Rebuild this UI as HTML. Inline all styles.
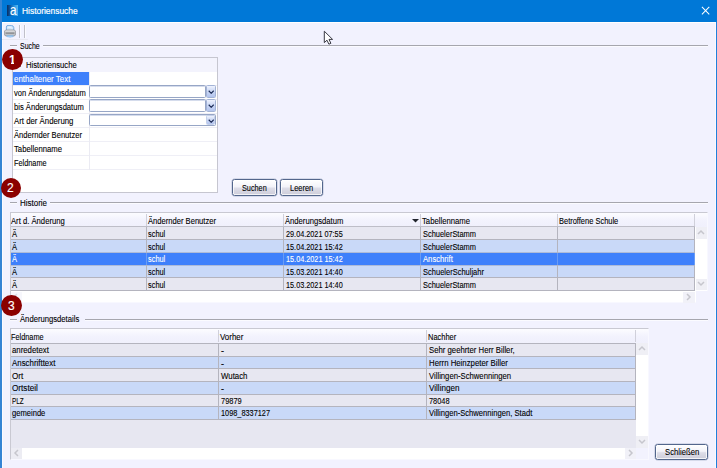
<!DOCTYPE html>
<html lang="de"><head><meta charset="utf-8"><title>Historiensuche</title>
<style>
*{box-sizing:border-box;margin:0;padding:0}
html,body{width:717px;height:468px;overflow:hidden}
body{background:#f2f2fe;font-family:"Liberation Sans","DejaVu Sans",sans-serif;font-size:8.5px;color:#000;position:relative}
.a{position:absolute}
.t{position:absolute;white-space:nowrap;line-height:12px;height:12px;font-size:8.5px;transform-origin:0 50%;-webkit-text-stroke:0.1px currentColor}
.w{color:#fff}
.circ{width:20.8px;height:20.8px;border-radius:50%;background:#8b0000;color:#fff}
.circ span{position:absolute;top:-.3px;width:41.6px;height:41.6px;font-size:24px;line-height:41.6px;text-align:center;transform:scale(.5);transform-origin:0 0;-webkit-text-stroke:.25px #fff}
.btn{border:1px solid #53668c;border-radius:2.5px;background:linear-gradient(#ffffff,#f3f3f9 45%,#dddde8 55%,#cdcdda);box-shadow:inset 0 0 0 1px rgba(255,255,255,.75),0 0 0 .5px rgba(83,102,140,.35)}
.combo{border:1px solid #97a6c6;background:#fff;border-radius:1.5px;box-shadow:inset 0 1px 0 #d5dcec}
.dd{border:1px solid #a3b3d6;background:linear-gradient(#eef2fd,#c9d6f4 50%,#b4c5ee);border-radius:1.5px}
</style></head><body>

<div class="a" style="left:0px;top:0px;width:717px;height:22px;background:#0078d7;"></div>
<div class="a" style="left:0px;top:0px;width:1.5px;height:468px;background:#3484d4;"></div>
<div class="a" style="left:715.8px;top:21.8px;width:1.2px;height:446.2px;background:#1f80dc;"></div>
<div class="a" style="left:714.9px;top:22px;width:0.9px;height:446px;background:#fafaff;"></div>
<div class="a" style="left:1.5px;top:22px;width:0.8px;height:446px;background:#fafaff;"></div>
<div class="a" style="left:1.5px;top:21.7px;width:714.5px;height:1.5px;background:#ffffff;"></div>
<div class="a" style="left:7.3px;top:5.3px;width:10.3px;height:10.4px;background:linear-gradient(90deg,#0a2f63 0%,#0f62b0 35%,#2b9be6 70%,#59b7f0 100%);"></div>
<div class="t w" style="left:9.5px;top:2.9px;font-size:14.5px;line-height:14px;height:14px;transform:scaleX(.8)">a</div>
<div class="t w" style="left:22.2px;top:5px;font-size:9.3px;transform:scaleX(.905);-webkit-text-stroke:.2px #fff">Historiensuche</div>
<svg class="a" style="left:701.2px;top:6.3px" width="9.2" height="9.2" viewBox="0 0 10 10"><path d="M1 1L9 9M9 1L1 9" stroke="#fff" stroke-width="1.1" fill="none"/></svg>
<svg class="a" style="left:4px;top:25.4px" width="12" height="12.6" viewBox="0 0 12 12.6">
<path d="M2.4 6V2.2Q2.4 .4 4 .4h3.6Q9.4 .6 9.8 2.6V6z" fill="#cfe5fb" stroke="#5f9bd8" stroke-width=".8"/>
<path d="M3.6 2.2h3.2l1.2 1.4" fill="none" stroke="#f4faff" stroke-width=".9"/>
<rect x=".4" y="5" width="11.2" height="6" rx="2" fill="#c1c2c5" stroke="#8a8c90" stroke-width=".7"/>
<rect x="1.2" y="5.6" width="9.6" height="1.2" rx=".6" fill="#dcdde0"/>
<rect x="1.6" y="7.5" width="8.8" height="1.3" fill="#85878b"/>
<path d="M2.8 10.4h6.4v1.2q-3.2 1.2-6.4 0z" fill="#a9d3f7" stroke="#76ade2" stroke-width=".5"/>
</svg>
<div class="a" style="left:18.8px;top:25px;width:1px;height:13px;background:#c0c0c9;"></div>
<div class="a" style="left:19.8px;top:25px;width:0.7px;height:13px;background:#fbfbff;"></div>
<div class="a" style="left:23.7px;top:25px;width:1px;height:13px;background:#c0c0c9;"></div>
<div class="a" style="left:24.7px;top:25px;width:0.7px;height:13px;background:#fbfbff;"></div>
<div class="a" style="left:2px;top:38.5px;width:26px;height:1px;background:#e8e8f1;"></div>
<div class="a" style="left:10px;top:45px;width:7px;height:1px;background:#a6a6ae;"></div>
<div class="a" style="left:10px;top:46px;width:7px;height:1px;background:#fbfbff;"></div>
<div class="t " style="left:20px;top:39.5px;transform:scaleX(0.819);">Suche</div>
<div class="a" style="left:42.8px;top:45px;width:665.2px;height:1px;background:#a6a6ae;"></div>
<div class="a" style="left:42.8px;top:46px;width:665.2px;height:1px;background:#fbfbff;"></div>
<div class="a" style="left:10px;top:202px;width:7px;height:1px;background:#a6a6ae;"></div>
<div class="a" style="left:10px;top:203px;width:7px;height:1px;background:#fbfbff;"></div>
<div class="t " style="left:20px;top:196.5px;transform:scaleX(0.939);">Historie</div>
<div class="a" style="left:50.099999999999994px;top:202px;width:657.9px;height:1px;background:#a6a6ae;"></div>
<div class="a" style="left:50.099999999999994px;top:203px;width:657.9px;height:1px;background:#fbfbff;"></div>
<div class="a" style="left:10px;top:318.5px;width:7px;height:1px;background:#a6a6ae;"></div>
<div class="a" style="left:10px;top:319.5px;width:7px;height:1px;background:#fbfbff;"></div>
<div class="t " style="left:20px;top:313.0px;transform:scaleX(0.902);">Änderungsdetails</div>
<div class="a" style="left:85.3px;top:318.5px;width:622.7px;height:1px;background:#a6a6ae;"></div>
<div class="a" style="left:85.3px;top:319.5px;width:622.7px;height:1px;background:#fbfbff;"></div>
<div class="a" style="left:12px;top:57px;width:206px;height:136px;background:#ffffff;border:1px solid #c6c6d0"></div>
<div class="a" style="left:13px;top:58px;width:204px;height:13.5px;background:#f3f3fd;"></div>
<div class="t " style="left:26.4px;top:58.5px;transform:scaleX(0.902);">Historiensuche</div>
<div class="a" style="left:14.4px;top:60.4px;width:6.2px;height:6.2px;background:#fff;border:.7px solid #7a7a88"></div>
<div class="a" style="left:13px;top:71.5px;width:75.5px;height:13.5px;background:#3e80fb;"></div>
<div class="t w" style="left:13.8px;top:73.1px;transform:scaleX(0.935);">enthaltener Text</div>
<div class="a" style="left:13px;top:85px;width:204px;height:1px;background:#efeff6;"></div>
<div class="t " style="left:13.8px;top:87.1px;transform:scaleX(0.889);">von Änderungsdatum</div>
<div class="a" style="left:13px;top:99px;width:204px;height:1px;background:#efeff6;"></div>
<div class="t " style="left:13.8px;top:101.1px;transform:scaleX(0.895);">bis Änderungsdatum</div>
<div class="a" style="left:13px;top:113px;width:204px;height:1px;background:#efeff6;"></div>
<div class="t " style="left:13.8px;top:115.1px;transform:scaleX(0.918);">Art der Änderung</div>
<div class="a" style="left:13px;top:127px;width:204px;height:1px;background:#efeff6;"></div>
<div class="t " style="left:13.8px;top:129.1px;transform:scaleX(0.894);">Ändernder Benutzer</div>
<div class="a" style="left:13px;top:141px;width:204px;height:1px;background:#efeff6;"></div>
<div class="t " style="left:13.8px;top:143.1px;transform:scaleX(0.908);">Tabellenname</div>
<div class="a" style="left:13px;top:155px;width:204px;height:1px;background:#efeff6;"></div>
<div class="t " style="left:13.8px;top:157.1px;transform:scaleX(0.861);">Feldname</div>
<div class="a" style="left:13px;top:169px;width:204px;height:1px;background:#efeff6;"></div>
<div class="a" style="left:88.5px;top:71.5px;width:1px;height:98px;background:#ebebf3;"></div>
<div class="a combo" style="left:89px;top:85.2px;width:116.5px;height:12.5px"></div>
<div class="a dd" style="left:206px;top:85.2px;width:10px;height:12.5px"></div>
<div class="a combo" style="left:89px;top:99.2px;width:116.5px;height:12.5px"></div>
<div class="a dd" style="left:206px;top:99.2px;width:10px;height:12.5px"></div>
<div class="a combo" style="left:89px;top:113.9px;width:127.3px;height:12.5px"></div>
<div class="a dd" style="left:205.6px;top:114.9px;width:9.8px;height:10.5px;border-color:#c4d0ea"></div>
<svg class="a" style="left:207.6px;top:89.9px" width="6.4" height="4.6" viewBox="0 0 7 5"><path d="M.8 .8L3.5 3.6L6.2 .8" stroke="#1b2a55" stroke-width="1.25" fill="none"/></svg>
<svg class="a" style="left:207.6px;top:103.9px" width="6.4" height="4.6" viewBox="0 0 7 5"><path d="M.8 .8L3.5 3.6L6.2 .8" stroke="#1b2a55" stroke-width="1.25" fill="none"/></svg>
<svg class="a" style="left:207.6px;top:118.5px" width="6.4" height="4.6" viewBox="0 0 7 5"><path d="M.8 .8L3.5 3.6L6.2 .8" stroke="#1b2a55" stroke-width="1.25" fill="none"/></svg>
<div class="a btn" style="left:232px;top:179px;width:44.6px;height:16.8px"></div>
<div class="t " style="left:242.3px;top:181.70000000000002px;transform:scaleX(0.858);">Suchen</div>
<div class="a btn" style="left:279.8px;top:179px;width:43.4px;height:16.8px"></div>
<div class="t " style="left:290.1px;top:181.70000000000002px;transform:scaleX(0.878);">Leeren</div>
<div class="a btn" style="left:655px;top:444px;width:53px;height:15.5px"></div>
<div class="t " style="left:664.8px;top:446.05px;transform:scaleX(0.906);">Schließen</div>
<div class="a" style="left:10px;top:212px;width:698px;height:91px;background:#ffffff;border:1px solid #c9c9d2;border-right-color:#f8f8ff;border-bottom-color:#f8f8ff"></div>
<div class="a" style="left:11px;top:213px;width:696px;height:13.5px;background:linear-gradient(#fcfcff 0%,#f2f2fd 55%,#f0f0fc 100%);"></div>
<div class="a" style="left:11px;top:226.3px;width:684px;height:1px;background:#bebec8;"></div>
<div class="a" style="left:11px;top:227.0px;width:684px;height:13.0px;background:#e7e7f1;"></div>
<div class="a" style="left:11px;top:240.0px;width:684px;height:12.699999999999989px;background:#c9d9f8;"></div>
<div class="a" style="left:11px;top:252.7px;width:684px;height:12.600000000000023px;background:#3e80fb;"></div>
<div class="a" style="left:11px;top:265.3px;width:684px;height:12.599999999999966px;background:#c9d9f8;"></div>
<div class="a" style="left:11px;top:277.9px;width:684px;height:12.600000000000023px;background:#e7e7f1;"></div>
<div class="a" style="left:11px;top:239.3px;width:684px;height:1px;background:#b4b4be;"></div>
<div class="a" style="left:11px;top:277.2px;width:684px;height:1px;background:#b4b4be;"></div>
<div class="a" style="left:11px;top:289.8px;width:684px;height:1px;background:#b4b4be;"></div>
<div class="a" style="left:11px;top:252.0px;width:684px;height:1px;background:#aebbd8;"></div>
<div class="a" style="left:11px;top:264.6px;width:684px;height:1px;background:#aebbd8;"></div>
<div class="a" style="left:146.0px;top:214px;width:1px;height:12px;background:#d0d0da;"></div>
<div class="a" style="left:146.0px;top:227px;width:1px;height:63.5px;background:#b4b4be;"></div>
<div class="a" style="left:146.0px;top:252.8px;width:1px;height:12px;background:#6a9cf4;"></div>
<div class="a" style="left:283.2px;top:214px;width:1px;height:12px;background:#d0d0da;"></div>
<div class="a" style="left:283.2px;top:227px;width:1px;height:63.5px;background:#b4b4be;"></div>
<div class="a" style="left:283.2px;top:252.8px;width:1px;height:12px;background:#6a9cf4;"></div>
<div class="a" style="left:420.2px;top:214px;width:1px;height:12px;background:#d0d0da;"></div>
<div class="a" style="left:420.2px;top:227px;width:1px;height:63.5px;background:#b4b4be;"></div>
<div class="a" style="left:420.2px;top:252.8px;width:1px;height:12px;background:#6a9cf4;"></div>
<div class="a" style="left:557.3px;top:214px;width:1px;height:12px;background:#d0d0da;"></div>
<div class="a" style="left:557.3px;top:227px;width:1px;height:63.5px;background:#b4b4be;"></div>
<div class="a" style="left:557.3px;top:252.8px;width:1px;height:12px;background:#6a9cf4;"></div>
<div class="a" style="left:694.2px;top:214px;width:1px;height:12px;background:#d0d0da;"></div>
<div class="a" style="left:694.2px;top:227px;width:1px;height:63.5px;background:#b4b4be;"></div>
<div class="a" style="left:694.2px;top:252.8px;width:1px;height:12px;background:#6a9cf4;"></div>
<div class="t " style="left:11.2px;top:214.8px;transform:scaleX(0.903);">Art d. Änderung</div>
<div class="t " style="left:147.7px;top:214.8px;transform:scaleX(0.894);">Ändernder Benutzer</div>
<div class="t " style="left:284.9px;top:214.8px;transform:scaleX(0.9);">Änderungsdatum</div>
<div class="t " style="left:421.9px;top:214.8px;transform:scaleX(0.908);">Tabellenname</div>
<div class="t " style="left:559.0px;top:214.8px;transform:scaleX(0.879);">Betroffene Schule</div>
<div class="t " style="left:11.8px;top:227.8px;transform:scaleX(0.89);">Ä</div>
<div class="t " style="left:148.3px;top:227.8px;transform:scaleX(0.869);">schul</div>
<div class="t " style="left:285.5px;top:227.8px;transform:scaleX(0.857);">29.04.2021 07:55</div>
<div class="t " style="left:422.5px;top:227.8px;transform:scaleX(0.876);">SchuelerStamm</div>
<div class="t " style="left:11.8px;top:240.65px;transform:scaleX(0.89);">Ä</div>
<div class="t " style="left:148.3px;top:240.65px;transform:scaleX(0.869);">schul</div>
<div class="t " style="left:285.5px;top:240.65px;transform:scaleX(0.857);">15.04.2021 15:42</div>
<div class="t " style="left:422.5px;top:240.65px;transform:scaleX(0.876);">SchuelerStamm</div>
<div class="t w" style="left:11.8px;top:253.3px;transform:scaleX(0.89);">Ä</div>
<div class="t w" style="left:148.3px;top:253.3px;transform:scaleX(0.869);">schul</div>
<div class="t w" style="left:285.5px;top:253.3px;transform:scaleX(0.857);">15.04.2021 15:42</div>
<div class="t w" style="left:422.5px;top:253.3px;transform:scaleX(0.902);">Anschrift</div>
<div class="t " style="left:11.8px;top:265.90000000000003px;transform:scaleX(0.89);">Ä</div>
<div class="t " style="left:148.3px;top:265.90000000000003px;transform:scaleX(0.869);">schul</div>
<div class="t " style="left:285.5px;top:265.90000000000003px;transform:scaleX(0.857);">15.03.2021 14:40</div>
<div class="t " style="left:422.5px;top:265.90000000000003px;transform:scaleX(0.884);">SchuelerSchuljahr</div>
<div class="t " style="left:11.8px;top:278.5px;transform:scaleX(0.89);">Ä</div>
<div class="t " style="left:148.3px;top:278.5px;transform:scaleX(0.869);">schul</div>
<div class="t " style="left:285.5px;top:278.5px;transform:scaleX(0.857);">15.03.2021 14:40</div>
<div class="t " style="left:422.5px;top:278.5px;transform:scaleX(0.876);">SchuelerStamm</div>
<svg class="a" style="left:412px;top:219px" width="7" height="4" viewBox="0 0 7 4"><path d="M0 0H7L3.5 3.6z" fill="#20242c"/></svg>
<div class="a" style="left:695.5px;top:227px;width:11.5px;height:12px;background:#efeff5;"></div>
<svg class="a" style="left:697.3px;top:228.8px" width="8" height="8" viewBox="0 0 8 8"><path d="M1 5L4 2L7 5" stroke="#c6c6cd" stroke-width="1.5" fill="none"/></svg>
<div class="a" style="left:695.5px;top:278.5px;width:11.5px;height:11.5px;background:#efeff5;"></div>
<svg class="a" style="left:697.3px;top:280px" width="8" height="8" viewBox="0 0 8 8"><path d="M1 2L4 5L7 2" stroke="#c6c6cd" stroke-width="1.5" fill="none"/></svg>
<div class="a" style="left:683px;top:291.5px;width:11.5px;height:11px;background:#f1f1f8;"></div>
<svg class="a" style="left:685px;top:293px" width="8" height="8" viewBox="0 0 8 8"><path d="M2 1L5 4L2 7" stroke="#c6c6cd" stroke-width="1.5" fill="none"/></svg>
<div class="a" style="left:11px;top:291.5px;width:11px;height:11px;background:#f7f7fc;"></div>
<svg class="a" style="left:12px;top:293px" width="8" height="8" viewBox="0 0 8 8"><path d="M5 1L2 4L5 7" stroke="#dedee6" stroke-width="1.5" fill="none"/></svg>
<div class="a" style="left:695.5px;top:291px;width:12px;height:12px;background:#f2f2fe;"></div>
<div class="a" style="left:10px;top:328px;width:638.5px;height:131.5px;background:#e7e7f1;border:1px solid #c9c9d2;border-right-color:#f8f8ff;border-bottom-color:#f8f8ff"></div>
<div class="a" style="left:11px;top:329px;width:624.5px;height:13.5px;background:linear-gradient(#fcfcff 0%,#f2f2fd 55%,#f0f0fc 100%);"></div>
<div class="a" style="left:635.5px;top:329px;width:12px;height:13.5px;background:linear-gradient(#fcfcff 0%,#f2f2fd 55%,#f0f0fc 100%);"></div>
<div class="a" style="left:11px;top:343.4px;width:624px;height:13.100000000000023px;background:#e7e7f1;"></div>
<div class="a" style="left:11px;top:356.5px;width:624px;height:12.600000000000023px;background:#c9d9f8;"></div>
<div class="a" style="left:11px;top:369.1px;width:624px;height:12.5px;background:#e7e7f1;"></div>
<div class="a" style="left:11px;top:381.6px;width:624px;height:12.699999999999989px;background:#c9d9f8;"></div>
<div class="a" style="left:11px;top:394.3px;width:624px;height:12.5px;background:#e7e7f1;"></div>
<div class="a" style="left:11px;top:406.8px;width:624px;height:12.899999999999977px;background:#c9d9f8;"></div>
<div class="a" style="left:11px;top:342.59999999999997px;width:624.5px;height:1px;background:#b4b4be;"></div>
<div class="a" style="left:11px;top:355.7px;width:624.5px;height:1px;background:#b4b4be;"></div>
<div class="a" style="left:11px;top:368.3px;width:624.5px;height:1px;background:#b4b4be;"></div>
<div class="a" style="left:11px;top:380.8px;width:624.5px;height:1px;background:#b4b4be;"></div>
<div class="a" style="left:11px;top:393.5px;width:624.5px;height:1px;background:#b4b4be;"></div>
<div class="a" style="left:11px;top:406.0px;width:624.5px;height:1px;background:#b4b4be;"></div>
<div class="a" style="left:11px;top:418.9px;width:624.5px;height:1px;background:#b4b4be;"></div>
<div class="a" style="left:218.3px;top:330px;width:1px;height:12px;background:#d0d0da;"></div>
<div class="a" style="left:218.3px;top:343px;width:1px;height:76px;background:#b4b4be;"></div>
<div class="a" style="left:426.3px;top:330px;width:1px;height:12px;background:#d0d0da;"></div>
<div class="a" style="left:426.3px;top:343px;width:1px;height:76px;background:#b4b4be;"></div>
<div class="a" style="left:634.8px;top:330px;width:1px;height:12px;background:#d0d0da;"></div>
<div class="a" style="left:634.8px;top:343px;width:1px;height:76px;background:#b4b4be;"></div>
<div class="t " style="left:10.9px;top:330.8px;transform:scaleX(0.861);">Feldname</div>
<div class="t " style="left:220px;top:330.8px;transform:scaleX(0.932);">Vorher</div>
<div class="t " style="left:428px;top:330.8px;transform:scaleX(0.879);">Nachher</div>
<div class="t " style="left:11.6px;top:344.15px;transform:scaleX(0.917);">anredetext</div>
<div class="t " style="left:220.6px;top:345.15px;transform:scaleX(1.073);">-</div>
<div class="t " style="left:428.6px;top:344.15px;transform:scaleX(0.912);">Sehr geehrter Herr Biller,</div>
<div class="t " style="left:11.6px;top:357.0px;transform:scaleX(0.927);">Anschrifttext</div>
<div class="t " style="left:220.6px;top:358.0px;transform:scaleX(1.073);">-</div>
<div class="t " style="left:428.6px;top:357.0px;transform:scaleX(0.917);">Herrn Heinzpeter Biller</div>
<div class="t " style="left:11.6px;top:369.55px;transform:scaleX(0.952);">Ort</div>
<div class="t " style="left:220.6px;top:369.55px;transform:scaleX(0.923);">Wutach</div>
<div class="t " style="left:428.6px;top:369.55px;transform:scaleX(0.906);">Villingen-Schwenningen</div>
<div class="t " style="left:11.6px;top:382.15000000000003px;transform:scaleX(0.96);">Ortsteil</div>
<div class="t " style="left:220.6px;top:383.15000000000003px;transform:scaleX(1.073);">-</div>
<div class="t " style="left:428.6px;top:382.15000000000003px;transform:scaleX(0.955);">Villingen</div>
<div class="t " style="left:11.6px;top:394.75px;transform:scaleX(0.754);">PLZ</div>
<div class="t " style="left:220.6px;top:394.75px;transform:scaleX(0.878);">79879</div>
<div class="t " style="left:428.6px;top:394.75px;transform:scaleX(0.869);">78048</div>
<div class="t " style="left:11.6px;top:407.45px;transform:scaleX(0.893);">gemeinde</div>
<div class="t " style="left:220.6px;top:407.45px;transform:scaleX(0.863);">1098_8337127</div>
<div class="t " style="left:428.6px;top:407.45px;transform:scaleX(0.897);">Villingen-Schwenningen, Stadt</div>
<div class="a" style="left:636px;top:343px;width:11.5px;height:104.5px;background:#ffffff;"></div>
<div class="a" style="left:636px;top:343px;width:11.5px;height:12px;background:#efeff5;"></div>
<svg class="a" style="left:637.8px;top:345px" width="8" height="8" viewBox="0 0 8 8"><path d="M1 5L4 2L7 5" stroke="#c6c6cd" stroke-width="1.5" fill="none"/></svg>
<div class="a" style="left:636px;top:436px;width:11.5px;height:11.5px;background:#efeff5;"></div>
<svg class="a" style="left:637.8px;top:437.5px" width="8" height="8" viewBox="0 0 8 8"><path d="M1 2L4 5L7 2" stroke="#c6c6cd" stroke-width="1.5" fill="none"/></svg>
<div class="a" style="left:11px;top:447.7px;width:625px;height:11.3px;background:#ffffff;"></div>
<div class="a" style="left:11px;top:447.7px;width:11px;height:11.3px;background:#ececf3;"></div>
<svg class="a" style="left:12.5px;top:449.3px" width="8" height="8" viewBox="0 0 8 8"><path d="M5 1L2 4L5 7" stroke="#c6c6cd" stroke-width="1.5" fill="none"/></svg>
<div class="a" style="left:624.5px;top:447.7px;width:11px;height:11.3px;background:#f1f1f8;"></div>
<svg class="a" style="left:626.5px;top:449.3px" width="8" height="8" viewBox="0 0 8 8"><path d="M2 1L5 4L2 7" stroke="#c6c6cd" stroke-width="1.5" fill="none"/></svg>
<div class="a" style="left:636px;top:447.7px;width:11.5px;height:11.3px;background:#f2f2fe;"></div>
<svg class="a" style="left:322px;top:29px" width="14" height="18" viewBox="0 0 14 18"><path d="M2.3 2.2V13.6L5 11.2L6.9 15.2L8.9 14.3L7 10.4H10.6z" fill="#fff" stroke="#3a3a44" stroke-width="1" stroke-linejoin="round"/></svg>
<div class="a circ" style="left:2px;top:49px"><span style="left:-0.4px;font-weight:bold;-webkit-text-stroke:0">1</span></div>
<div class="a" style="left:8.6px;top:62px;width:2.3px;height:2.2px;background:#8b0000;"></div>
<div class="a" style="left:14px;top:62px;width:2.4px;height:2.2px;background:#8b0000;"></div>
<div class="a circ" style="left:0.5px;top:177.6px"><span style="left:-0.2px;">2</span></div>
<div class="a circ" style="left:1.3px;top:295.3px"><span style="left:-0.5px;">3</span></div>
</body></html>
